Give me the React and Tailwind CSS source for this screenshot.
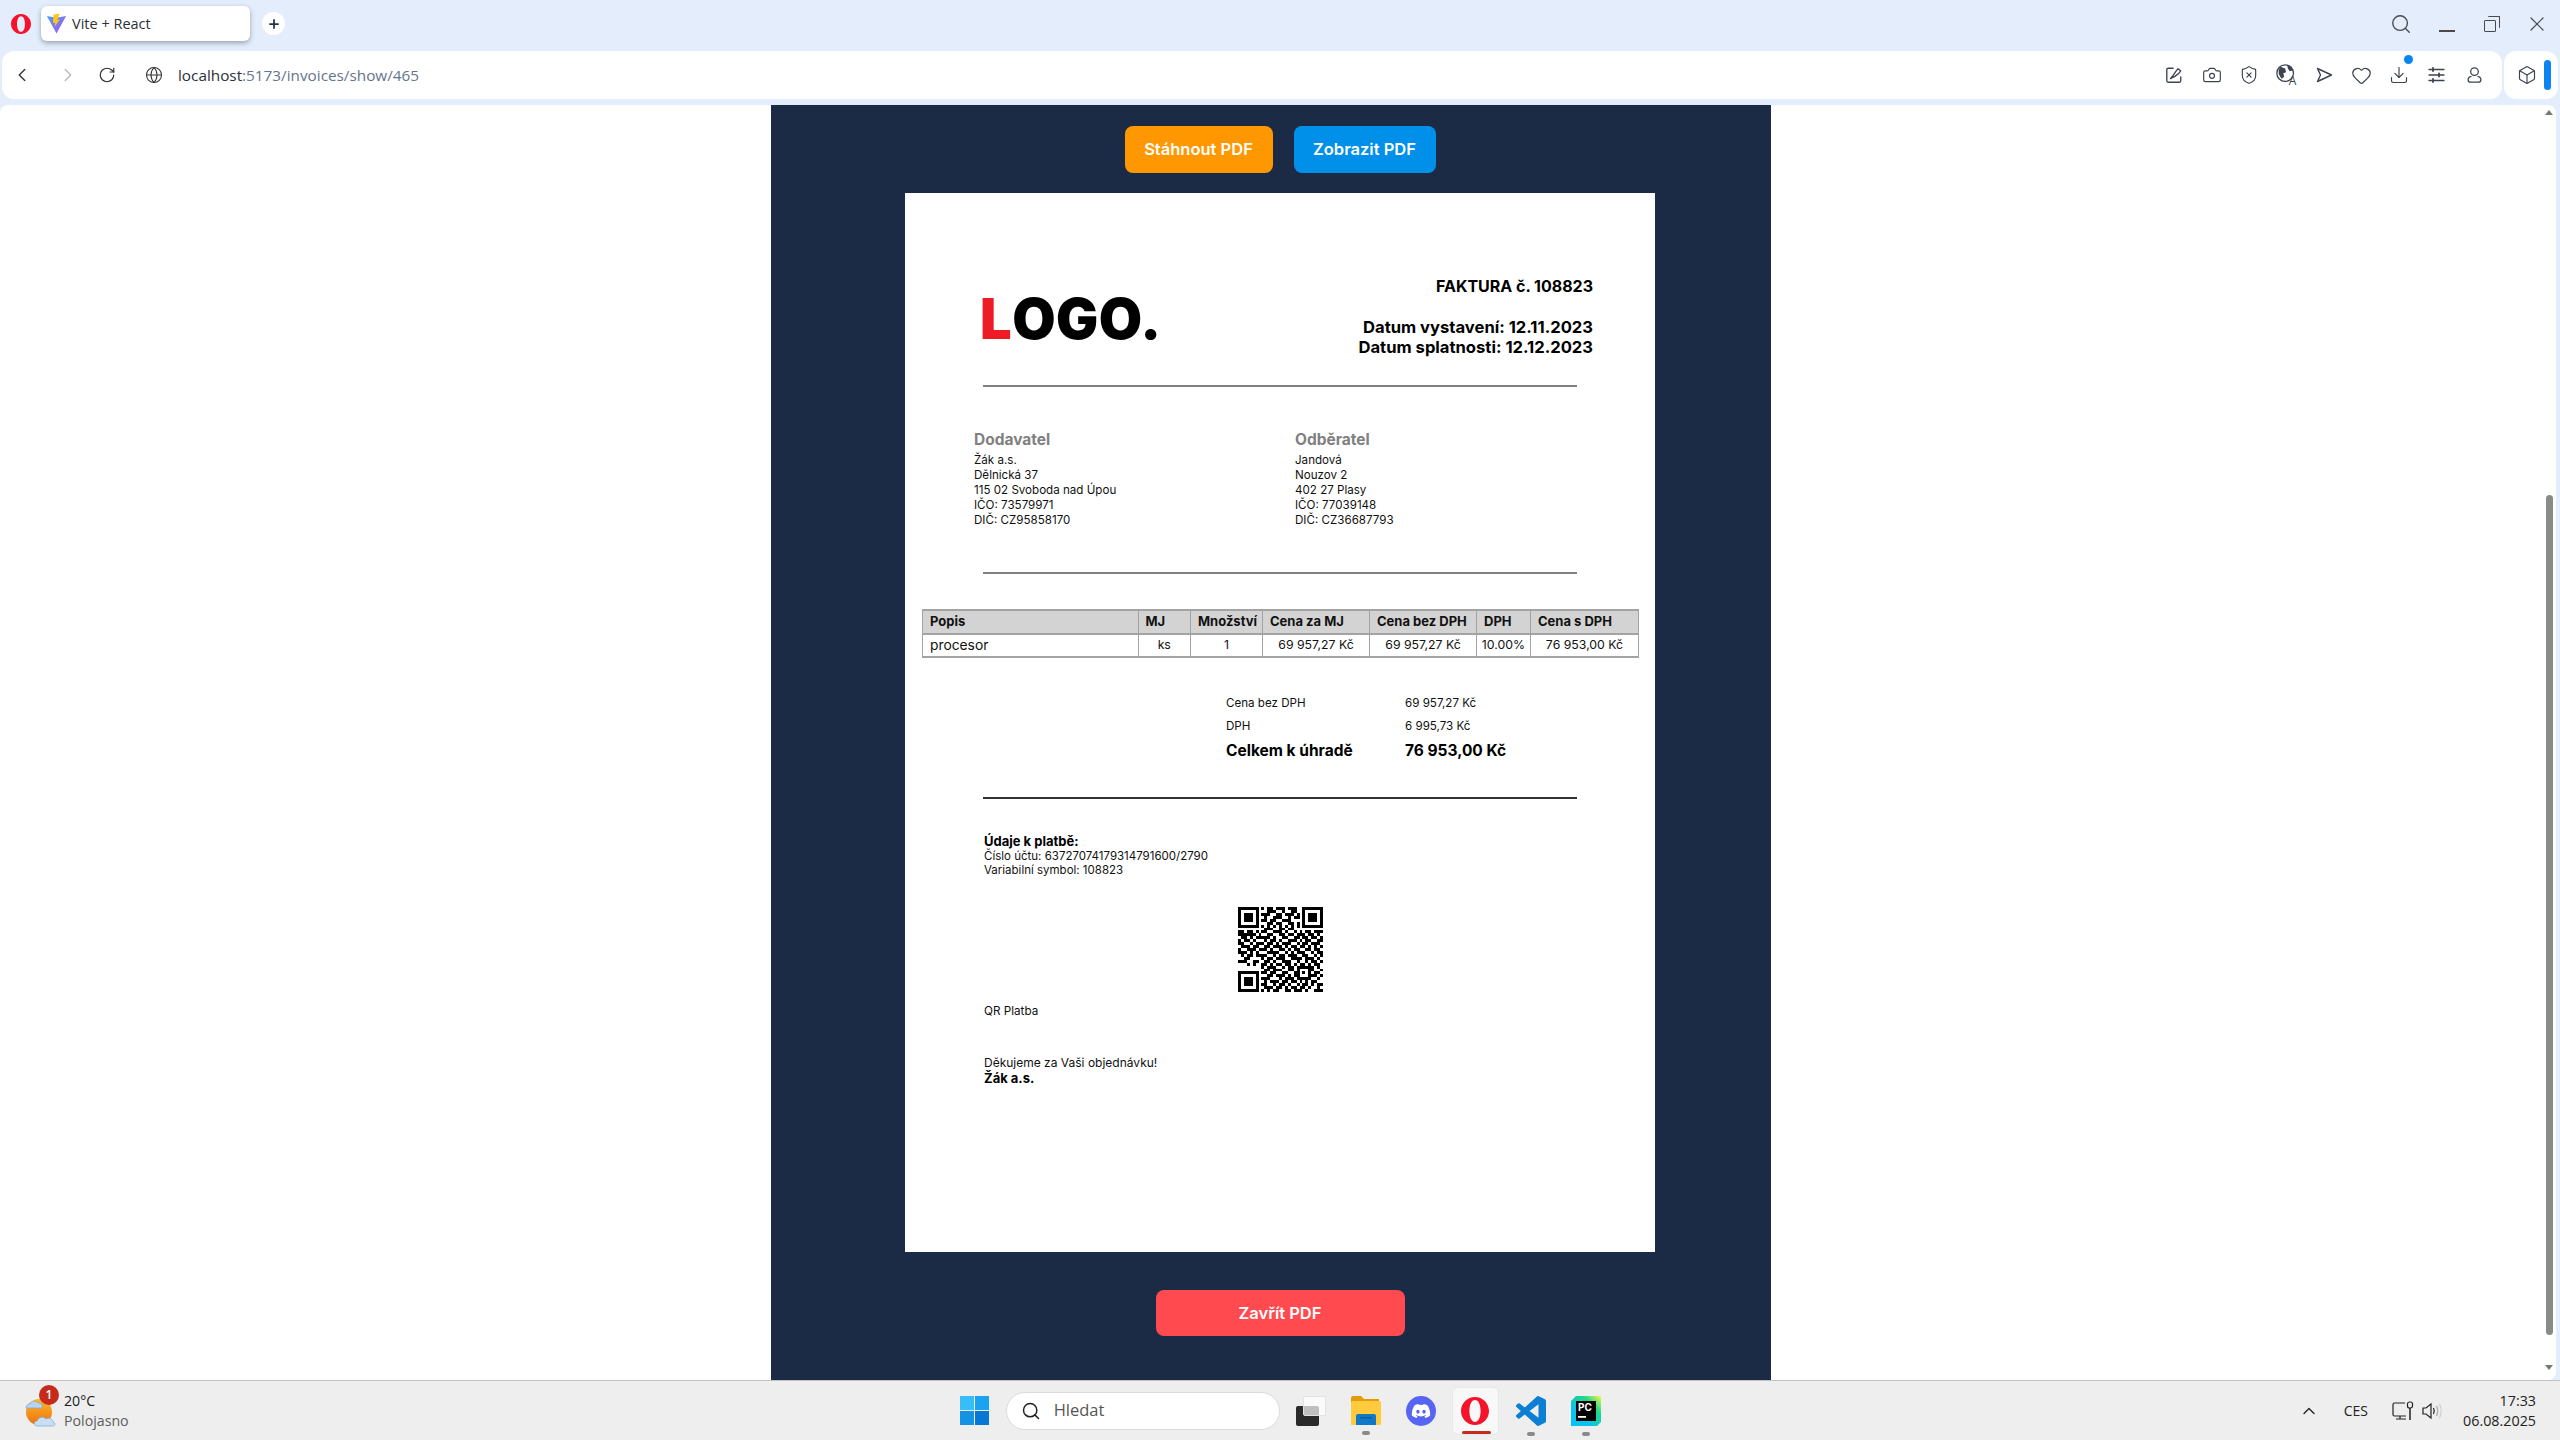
import { ChevronLeft, ChevronRight, RotateCw, Globe, Camera, ShieldX, Heart, Download, Box, Search, X, Plus, ChevronUp } from 'lucide-react';
import { FaDiscord } from 'react-icons/fa';

const QR_ROWS = [
  '00000000101101110111000000000',
  '00000000001110010011000000000',
  '00000000111001101110100000000',
  '00000000010011100101100000000',
  '00000000110110011100000000000',
  '00000000001101100110100000000',
  '00000000101010101010100000000',
  '00000000011100110110000000000',
  '11011010110011101001010110111',
  '11111101001100110110111011010',
  '01101011111010011001101101101',
  '10110100010110100111010110011',
  '11001011101101011100101101110',
  '01110110011011101011011010101',
  '10011101110100110101100110110',
  '11101010001111001010111001011',
  '01011011110010110111001100101',
  '00110000101101110011110111010',
  '11100110011010011100100101101',
  '00010100110101101101011010110',
  '00000000101110010110111111010',
  '00000000011011100110001011001',
  '00000000110110011001110110110',
  '00000000001101110101011001101',
  '00000000111000101110101110010',
  '00000000010111011011010101100',
  '00000000110010110100101101011',
  '00000000011101101011011010010',
  '00000000101011001101110100111',
];

const buildQrPath = () => {
  const grid = QR_ROWS.map((row) => row.split('').map((c) => c === '1'));
  const finder = (cx, cy) => {
    for (let y = 0; y < 7; y++) {
      for (let x = 0; x < 7; x++) {
        const ring = x === 0 || y === 0 || x === 6 || y === 6;
        const core = x >= 2 && x <= 4 && y >= 2 && y <= 4;
        grid[cy + y][cx + x] = ring || core;
      }
    }
  };
  finder(0, 0);
  finder(22, 0);
  finder(0, 22);
  // alignment square
  for (let y = 0; y < 5; y++) {
    for (let x = 0; x < 5; x++) {
      const ring = x === 0 || y === 0 || x === 4 || y === 4;
      grid[20 + y][20 + x] = ring || (x === 2 && y === 2);
    }
  }
  let d = '';
  grid.forEach((row, y) => row.forEach((on, x) => {
    if (on) d += `M${x} ${y}h1v1h-1z`;
  }));
  return d;
};

const OperaLogo = ({ size = 20 }) => (
  <svg width={size} height={size} viewBox="0 0 24 24">
    <path fillRule="evenodd" fill="#f5132c" d="M12 0C5.4 0 0 5.4 0 12s5.4 12 12 12 12-5.4 12-12S18.600 0 12 0zm0 2.600c3 0 4.800 4.200 4.800 9.400s-1.800 9.400-4.800 9.400S7.200 17.200 7.200 12 9 2.600 12 2.600z" />
  </svg>
);

const ViteLogo = () => (
  <svg width="21" height="21" viewBox="0 0 24 24">
    <defs>
      <linearGradient id="viteA" x1="0" y1="0" x2="1" y2="1">
        <stop offset="0" stopColor="#41a5ee" />
        <stop offset="1" stopColor="#b44cf5" />
      </linearGradient>
    </defs>
    <path fill="url(#viteA)" d="M1 3.500 12 23.500 23 3.500 12 5.500z" />
    <path fill="#ffc517" d="M15.500 0.500 8.500 2 8 11.500l2.500-.5-.6 4.500L16 7.500l-2.800.5z" />
  </svg>
);

const SnapIcon = () => (
  <svg width="18" height="18" viewBox="0 0 20 20" fill="none" stroke="#3d4450" strokeWidth="1.500" strokeLinecap="round" strokeLinejoin="round">
    <path d="M9 2.500H3.500a1.500 1.500 0 0 0-1.500 1.500v12.500a1.500 1.500 0 0 0 1.500 1.500H16a1.500 1.500 0 0 0 1.500-1.500V12" />
    <path d="M6 14l3-3.500 3.500-5 2-2.500 3 2.500-2 2.500-4.500 3.500z" />
  </svg>
);

const TranslateIcon = () => (
  <svg width="24" height="24" viewBox="0 0 26 26">
    <circle cx="11" cy="11" r="9" fill="none" stroke="#3d4450" strokeWidth="1.400" />
    <path fill="#3d4450" d="M6 4l5 2 1 4-3 1 1 4-3 2-3-5 0-5zM13 2l5 2 1 4-3 1-2-3z" />
    <text x="15" y="24" fontSize="13" fontFamily="'Open Sans',sans-serif" fill="#3d4450">A</text>
  </svg>
);

const SendIcon = () => (
  <svg width="17" height="16" viewBox="0 0 17 16" fill="none" stroke="#3d4450" strokeWidth="1.400" strokeLinejoin="round">
    <path d="M1.500 1.500l14 6.500-14 6.500 3-6.500z" />
  </svg>
);

const SlidersIcon = () => (
  <svg width="17" height="16" viewBox="0 0 17 16" fill="none" stroke="#3d4450" strokeWidth="1.300" strokeLinecap="round">
    <path d="M1 2.500h15M1 8h15M1 13.500h15" />
    <path d="M5 1v3M11 6.500v3M5 12v3" strokeWidth="1.800" />
  </svg>
);

const ProfileIcon = () => (
  <svg width="17" height="18" viewBox="0 0 20 20" fill="none" stroke="#3d4450" strokeWidth="1.500">
    <circle cx="10" cy="6" r="4.500" />
    <path d="M6.500 11.500C3.500 12 2.500 13.500 2.500 15.500 2.500 17.500 4 18.500 6 18.500h8c2 0 3.500-1 3.500-3 0-2-1-3.500-4-4" />
  </svg>
);

const ToolbarIcon = ({ children, dot }) => (
  <div className="relative w-[37.5px] h-[30px] flex items-center justify-center text-[#3d4450]">
    {children}
    {dot && <span className="absolute top-[-5px] right-[5px] w-[9px] h-[9px] rounded-full bg-[#0a84f0]" />}
  </div>
);

const BrowserChrome = () => (
  <div className="h-[105px] shrink-0 flex flex-col">
    <div className="h-[51px] flex items-start">
      <div className="ml-[11px] mt-[14px]"><OperaLogo /></div>
      <div className="ml-[10px] mt-[6px] w-[209px] h-[35px] bg-white rounded-md shadow-[0_2px_5px_rgba(60,70,90,0.45)] flex items-center pl-[5px] gap-[5px]">
        <ViteLogo />
        <span className="font-['Open_Sans',sans-serif] text-[14.5px] text-[#2b2f36]">Vite + React</span>
      </div>
      <div className="ml-[12px] mt-[12px] w-[23px] h-[23px] rounded-full bg-white flex items-center justify-center">
        <Plus size={14} strokeWidth={3} color="#27303f" />
      </div>
      <div className="ml-auto flex items-center h-[48px] text-[#4a4a4a]">
        <Search size={22} strokeWidth={1.5} />
        <div className="ml-[27px] w-[16px] h-[1.5px] bg-[#4a4a4a] mt-[14px]" />
        <div className="ml-[29px] relative w-[16px] h-[16px]">
          <div className="absolute left-0 bottom-0 w-[12px] h-[12px] border-[1.5px] border-[#4a4a4a] rounded-[1px] bg-[#e3edfb]" />
          <div className="absolute right-0 top-0 w-[12px] h-[12px] border-t-[1.5px] border-r-[1.5px] border-[#4a4a4a] rounded-[1px]" />
        </div>
        <X size={24} strokeWidth={1.2} className="ml-[25px] mr-[11px]" />
      </div>
    </div>
    <div className="h-[48px] flex">
      <div className="ml-[2px] w-[2500px] bg-white rounded-xl flex items-center">
        <ChevronLeft size={22} strokeWidth={1.5} color="#333" className="ml-[9px]" />
        <ChevronRight size={22} strokeWidth={1.5} color="#b5bac2" className="ml-[24px]" />
        <RotateCw size={18} strokeWidth={1.6} color="#333" className="ml-[19px]" />
        <Globe size={18} strokeWidth={1.4} color="#333" className="ml-[29px]" />
        <span className="ml-[15px] font-['Open_Sans',sans-serif] text-[15.3px] text-[#2b2f36]">localhost<span className="text-[#64748b]">:5173/invoices/show/465</span></span>
        <div className="ml-auto mr-[9px] flex items-center">
          <ToolbarIcon><SnapIcon /></ToolbarIcon>
          <ToolbarIcon><Camera size={20} strokeWidth={1.4} /></ToolbarIcon>
          <ToolbarIcon><ShieldX size={20} strokeWidth={1.4} /></ToolbarIcon>
          <ToolbarIcon><TranslateIcon /></ToolbarIcon>
          <ToolbarIcon><SendIcon /></ToolbarIcon>
          <ToolbarIcon><Heart size={21} strokeWidth={1.4} /></ToolbarIcon>
          <ToolbarIcon dot><Download size={20} strokeWidth={1.4} /></ToolbarIcon>
          <ToolbarIcon><SlidersIcon /></ToolbarIcon>
          <ToolbarIcon><ProfileIcon /></ToolbarIcon>
        </div>
      </div>
      <div className="ml-[2px] w-[54px] bg-white rounded-xl flex items-center">
        <Box size={20} strokeWidth={1.4} color="#3d4450" className="ml-[13px]" />
        <div className="ml-[7px] w-[7px] h-[30px] rounded-full bg-[#0a84f0]" />
      </div>
    </div>
  </div>
);

const Divider = ({ className = '' }) => (
  <div className={`mx-[78px] h-[2px] w-[594px] ${className}`} />
);

const PartyBlock = ({ title, lines, className = '' }) => (
  <div className={className}>
    <div className="text-[15.5px] leading-[20px] font-bold text-[#808080]">{title}</div>
    <div className="text-[11.6px] leading-[15px] text-[#111] mt-[2.5px]">
      {lines.map((line) => <div key={line}>{line}</div>)}
    </div>
  </div>
);

const tableHead = ['Popis', 'MJ', 'Množství', 'Cena za MJ', 'Cena bez DPH', 'DPH', 'Cena s DPH'];
const tableRow = ['ks', '1', '69 957,27 Kč', '69 957,27 Kč', '10.00%', '76 953,00 Kč'];

const InvoiceTable = () => (
  <table className="ml-[17px] mt-[35px] w-[716px] table-fixed border-collapse text-[12.3px] text-[#111]">
    <colgroup>
      <col className="w-[215.5px]" />
      <col className="w-[52.5px]" />
      <col className="w-[72px]" />
      <col className="w-[107px]" />
      <col className="w-[107px]" />
      <col className="w-[54px]" />
      <col className="w-[108px]" />
    </colgroup>
    <thead>
      <tr className="h-[24px] bg-[#d3d3d3]">
        {tableHead.map((head) => (
          <th key={head} className="border-x border-y-2 border-[#a3a3a3] px-[7px] text-left text-[13px] font-bold whitespace-nowrap">{head}</th>
        ))}
      </tr>
    </thead>
    <tbody>
      <tr className="h-[23px]">
        <td className="border-x border-b-2 border-[#a3a3a3] px-[7px] text-[13.8px]">procesor</td>
        {tableRow.map((cell, index) => (
          <td key={index} className="border-x border-b-2 border-[#a3a3a3] text-center whitespace-nowrap">{cell}</td>
        ))}
      </tr>
    </tbody>
  </table>
);

const InvoicePaper = () => (
  <div className="w-[750px] h-[1059px] bg-white pt-[83px] font-[Inter,sans-serif] text-[#111]">
    <div className="pl-[75px] pr-[62px] flex justify-between items-start">
      <div className="mt-[18px] h-[50px] flex items-center text-[56px] font-black leading-none text-black tracking-[0.5px]">
        <span className="text-[#ed1c24]">L</span>OGO.
      </div>
      <div className="text-right text-black">
        <div className="text-[16px] leading-[20px] font-bold">FAKTURA č. 108823</div>
        <div className="mt-[21px] text-[16.6px] leading-[20px] font-bold">Datum vystavení: 12.11.2023</div>
        <div className="text-[16.6px] leading-[20px] font-bold">Datum splatnosti: 12.12.2023</div>
      </div>
    </div>
    <Divider className="mt-[28px] bg-[#808080]" />
    <div className="mt-[43px] flex">
      <PartyBlock
        className="ml-[69px] w-[321px]"
        title="Dodavatel"
        lines={['Žák a.s.', 'Dělnická 37', '115 02 Svoboda nad Úpou', 'IČO: 73579971', 'DIČ: CZ95858170']}
      />
      <PartyBlock
        title="Odběratel"
        lines={['Jandová', 'Nouzov 2', '402 27 Plasy', 'IČO: 77039148', 'DIČ: CZ36687793']}
      />
    </div>
    <Divider className="mt-[44.5px] bg-[#808080]" />
    <InvoiceTable />
    <div className="mt-[34.5px] ml-[321px] w-[300px] text-[11.6px]">
      <div className="h-[23px] flex items-center"><span className="w-[179px]">Cena bez DPH</span><span>69 957,27 Kč</span></div>
      <div className="h-[23px] flex items-center"><span className="w-[179px]">DPH</span><span>6 995,73 Kč</span></div>
      <div className="h-[25px] flex items-center text-[15.5px] font-bold text-black"><span className="w-[179px]">Celkem k úhradě</span><span>76 953,00 Kč</span></div>
    </div>
    <Divider className="mt-[33px] bg-[#333333]" />
    <div className="mt-[35.5px] ml-[79px] text-[11.5px] leading-[14.5px]">
      <div className="text-[13px] font-bold text-black">Údaje k platbě:</div>
      <div>Číslo účtu: 63727074179314791600/2790</div>
      <div>Variabilní symbol: 108823</div>
    </div>
    <svg width="85" height="85" viewBox="0 0 29 29" shapeRendering="crispEdges" className="mt-[29.5px] mx-auto">
      <path d={buildQrPath()} fill="#000" />
    </svg>
    <div className="mt-[11.5px] ml-[79px] text-[11.7px] leading-[15px]">QR Platba</div>
    <div className="mt-[36px] ml-[79px] text-[12px] leading-[15px]">Děkujeme za Vaši objednávku!</div>
    <div className="ml-[79px] text-[13px] leading-[17px] font-bold text-black">Žák a.s.</div>
  </div>
);

const InvoicePanel = () => (
  <div className="w-[1000px] h-full bg-[#1b2a45] flex flex-col items-center pt-[21px] pl-[18px] font-[Inter,sans-serif]">
    <div className="flex gap-[21px]">
      <button className="w-[148px] h-[47px] rounded-lg bg-[#ff9800] text-white text-[16.5px] font-semibold">Stáhnout PDF</button>
      <button className="w-[142px] h-[47px] rounded-lg bg-[#0090e9] text-white text-[16.5px] font-semibold">Zobrazit PDF</button>
    </div>
    <div className="mt-[20px]"><InvoicePaper /></div>
    <button className="mt-[38px] w-[249px] h-[46px] rounded-lg bg-[#ff4a4f] text-white text-[16.5px] font-semibold">Zavřít PDF</button>
  </div>
);

const Scrollbar = () => (
  <div className="w-[14px] shrink-0 flex flex-col items-center pt-[5px]">
    <div className="w-0 h-0 border-x-[4px] border-x-transparent border-b-[5px] border-b-[#777]" />
    <div className="mt-[380px] w-[7px] h-[840px] rounded-full bg-[#8a8a8a]" />
    <div className="mt-[30px] w-0 h-0 border-x-[4px] border-x-transparent border-t-[5px] border-t-[#777]" />
  </div>
);

const WeatherIcon = () => (
  <svg width="32" height="34" viewBox="0 0 32 34">
    <defs>
      <linearGradient id="sun" x1="0" y1="0" x2="0" y2="1">
        <stop offset="0" stopColor="#fbb829" />
        <stop offset="1" stopColor="#f0700f" />
      </linearGradient>
    </defs>
    <circle cx="14" cy="18" r="13" fill="url(#sun)" />
    <path fill="#b8d4f2" stroke="#7fa6d6" strokeWidth="0.700" d="M1 14c0-3 2-4 4-4 1-3 6-4 8-1 3 0 5 2 4 5z" />
    <path fill="#c8def5" stroke="#7fa6d6" strokeWidth="0.700" d="M12 32c-3 0-4-5 0-5 1-4 7-5 9-2 3-2 7 0 7 3 3 1 2 4 0 4z" />
  </svg>
);

const FolderIcon = () => (
  <svg width="30" height="29" viewBox="0 0 30 29">
    <path fill="#e39c09" d="M0 2a2 2 0 0 1 2-2h8l3 3h15v5H0z" />
    <rect x="0" y="5" width="30" height="24" rx="1.500" fill="#ffcb3d" />
    <path fill="#0f78c9" d="M5 20a2 2 0 0 1 2-2h16a2 2 0 0 1 2 2v9H5z" />
    <rect x="9" y="21" width="12" height="1.500" fill="#0a5d9e" />
  </svg>
);

const VsCodeIcon = () => (
  <svg width="30" height="30" viewBox="0 0 24 24">
    <path fill="#0a7fd4" d="M23.15 2.587L18.21.21a1.494 1.494 0 0 0-1.705.29l-9.46 8.63-4.12-3.128a.999.999 0 0 0-1.276.057L.327 7.261A1 1 0 0 0 .326 8.74L3.899 12 .326 15.26a1 1 0 0 0 .001 1.479L1.65 17.94a.999.999 0 0 0 1.276.057l4.12-3.128 9.46 8.63a1.492 1.492 0 0 0 1.704.29l4.942-2.377A1.5 1.5 0 0 0 24 20.06V3.939a1.5 1.5 0 0 0-.85-1.352zm-5.146 14.861L10.826 12l7.178-5.448v10.896z" />
  </svg>
);

const PyCharmIcon = () => (
  <svg width="30" height="30" viewBox="0 0 30 30">
    <defs>
      <linearGradient id="pc" x1="0" y1="1" x2="1" y2="0">
        <stop offset="0.300" stopColor="#07c3f2" />
        <stop offset="0.700" stopColor="#21d789" />
        <stop offset="1" stopColor="#fcf84a" />
      </linearGradient>
    </defs>
    <path fill="url(#pc)" d="M5 0h25v26l-4 4H0V5z" />
    <rect x="5" y="5" width="20" height="20" fill="#000" />
    <text x="7" y="15" fontSize="10" fontWeight="700" fill="#fff" fontFamily="Inter,sans-serif">PC</text>
    <rect x="7" y="20" width="8" height="1.800" fill="#fff" />
  </svg>
);

const NetworkIcon = () => (
  <svg width="22" height="20" viewBox="0 0 22 20" fill="none" stroke="#222" strokeWidth="1.200">
    <path d="M13 2H2.500A1.500 1.500 0 0 0 1 3.500v10A1.500 1.500 0 0 0 2.500 15H14" />
    <path d="M4 18h10M8 15v3" />
    <rect x="15.500" y="1" width="5" height="6" rx="2" />
    <path d="M18 7v12" strokeWidth="1.500" />
  </svg>
);

const SpeakerIcon = () => (
  <svg width="22" height="20" viewBox="0 0 22 20" fill="none" stroke="#222" strokeWidth="1.200">
    <path d="M1 7h3l5-4v14l-5-4H1z" />
    <path d="M11.500 7c1 2 1 4 0 6" />
    <path d="M14.500 5c1.500 3 1.500 7 0 10" stroke="#aaa" />
    <path d="M17.500 3c2 4 2 10 0 14" stroke="#ccc" />
  </svg>
);

const RunDot = () => <span className="absolute bottom-[-10px] left-1/2 -translate-x-1/2 w-[8px] h-[4px] rounded-full bg-[#8a8a8a]" />;

const Taskbar = () => (
  <div className="h-[60px] shrink-0 border-t border-[#c2c2c2] bg-[#eeeeee] flex items-center font-['Open_Sans',sans-serif]">
    <div className="relative ml-[25px] w-[39px] flex items-center">
      <WeatherIcon />
      <span className="absolute left-[14px] top-[-9px] w-[20px] h-[20px] rounded-full bg-[#c42b1c] text-white text-[12px] font-semibold flex items-center justify-center">1</span>
    </div>
    <div className="leading-[20px] text-[14.2px]">
      <div className="text-[#1b1b1b]">20°C</div>
      <div className="text-[#5d5d5d]">Polojasno</div>
    </div>
    <div className="ml-[831px] grid grid-cols-2 gap-[1px] w-[29px] h-[29px]">
      <span className="bg-[#38bdf8]" />
      <span className="bg-[#1aa3ee]" />
      <span className="bg-[#1493e2]" />
      <span className="bg-[#0678d4]" />
    </div>
    <div className="ml-[17px] w-[274px] h-[38px] rounded-full bg-white border border-[#dcdcdc] flex items-center pl-[14px]">
      <Search size={20} strokeWidth={1.8} color="#222" />
      <span className="ml-[13px] text-[16.5px] text-[#555]">Hledat</span>
    </div>
    <div className="ml-[16px] relative w-[30px] h-[30px]">
      <span className="absolute left-0 bottom-0 w-[23px] h-[20px] rounded-[2px] bg-[#2a2a2a]" />
      <span className="absolute right-0 top-0 w-[23px] h-[20px] rounded-[2px] bg-white/70 border border-[#e2e2e2]" />
    </div>
    <div className="relative ml-[25px]"><FolderIcon /><RunDot /></div>
    <div className="ml-[25px] w-[30px] h-[30px] rounded-full bg-[#5865f2] flex items-center justify-center text-white"><FaDiscord size={20} /></div>
    <div className="relative ml-[16px] w-[47px] h-[48px] rounded-md bg-[#f8f8f8] border border-[#e8e8e8] flex items-center justify-center">
      <OperaLogo size={28} />
      <span className="absolute bottom-0 left-[9px] w-[29px] h-[3px] rounded-full bg-[#c42b1c]" />
    </div>
    <div className="relative ml-[17px]"><VsCodeIcon /><RunDot /></div>
    <div className="relative ml-[25px]"><PyCharmIcon /><RunDot /></div>
    <ChevronUp size={20} strokeWidth={1.6} color="#222" className="ml-[698px]" />
    <span className="ml-[25px] text-[14px] text-[#222]">CES</span>
    <div className="ml-[24px]"><NetworkIcon /></div>
    <div className="ml-[8px]"><SpeakerIcon /></div>
    <div className="ml-auto mr-[24px] text-right text-[14.3px] leading-[20px] text-[#222]">
      <div>17:33</div>
      <div>06.08.2025</div>
    </div>
  </div>
);

export default function App() {
  return (
    <div className="w-[2560px] h-[1440px] overflow-hidden bg-[#e3edfb] flex flex-col">
      <BrowserChrome />
      <div className="flex-1 min-h-0 w-[2556px] bg-white rounded-t-lg rounded-br-lg flex overflow-hidden">
        <div className="flex-1 flex justify-center">
          <InvoicePanel />
        </div>
        <Scrollbar />
      </div>
      <Taskbar />
    </div>
  );
}
